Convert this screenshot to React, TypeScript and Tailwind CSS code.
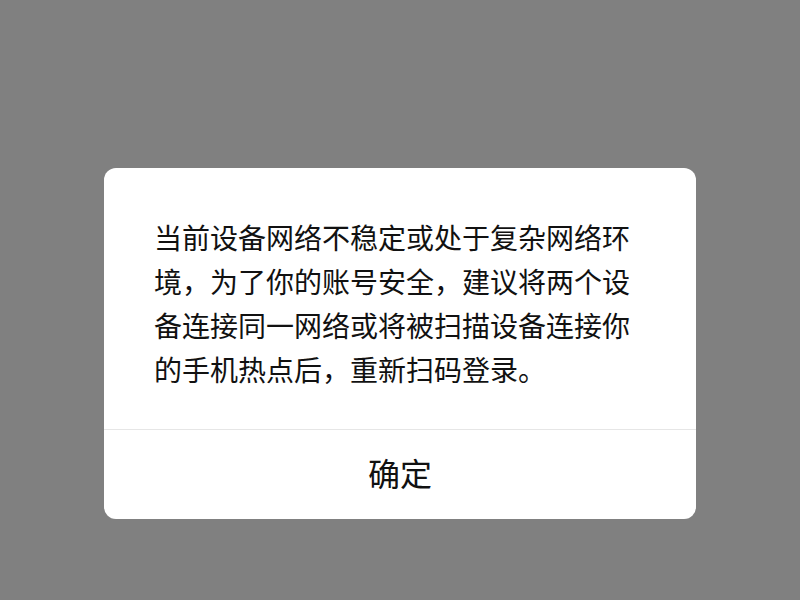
export default function App() {
  return (
    <div
      className="w-[800px] h-[600px] bg-[#808080] pt-[168px]"
      style={{ fontFamily: '"Noto Sans CJK SC", "Noto Sans", sans-serif' }}
    >
      <div className="mx-auto w-[592px] bg-white rounded-[12px] overflow-hidden">
        <p className="pt-[47px] pb-[38px] pl-[50px] pr-[50px] text-[28px] leading-[44px] text-[#111111]">
          当前设备网络不稳定或处于复杂网络环境，为了你的账号安全，建议将两个设备连接同一网络或将被扫描设备连接你的手机热点后，重新扫码登录。
        </p>
        <div className="h-px bg-[#e6e6e6]" />
        <button className="w-full h-[89px] pb-[6px] flex items-center justify-center text-[32px] text-[#111111]">
          确定
        </button>
      </div>
    </div>
  );
}
